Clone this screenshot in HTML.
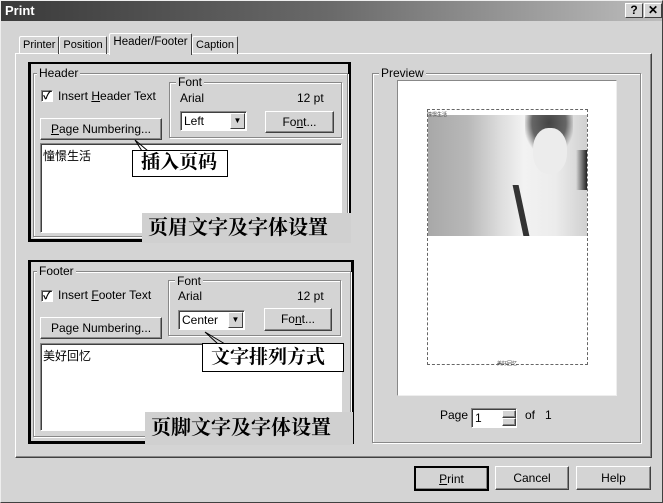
<!DOCTYPE html>
<html><head><meta charset="utf-8"><style>
*{box-sizing:border-box;margin:0;padding:0}
body{width:663px;height:503px;background:#d4d4d4;font-family:"Liberation Sans","Noto Sans CJK SC",sans-serif;font-size:12px;color:#000;position:relative;overflow:hidden}
.a{position:absolute}
.title{left:0;top:0;width:663px;height:21px;background:linear-gradient(90deg,#3a3a3a,#6a6a6a 50%,#bdbdbd);color:#fff;font-weight:bold;font-size:13px;padding:3px 5px}
.tb{width:18px;height:15px;background:#d4d4d4;border:1px solid;border-color:#fff #404040 #404040 #fff;font-weight:bold;font-size:12px;color:#000;text-align:center;line-height:13px}
.tab{top:36px;height:18px;border:1px solid;border-bottom:none;border-color:#fff #404040 #404040 #fff;border-radius:2px 2px 0 0;padding:2px 3px;font-size:11px;white-space:nowrap;text-align:center}
.panel{left:15px;top:53px;width:637px;height:405px;border:1px solid;border-color:#fff #404040 #404040 #fff;box-shadow:inset -1px -1px 0 #888}
.grp{border:1px solid #888;box-shadow:1px 1px 0 #fff inset,1px 1px 0 #fff}
.lbl{background:#d4d4d4;padding:0 2px}
.btn{border:1px solid;border-color:#fff #404040 #404040 #fff;box-shadow:inset -1px -1px 0 #888;text-align:center;background:#d4d4d4}
.sunk{border:1px solid;border-color:#888 #fff #fff #888;box-shadow:inset 1px 1px 0 #404040;background:#fff}
.cb{width:12px;height:12px;background:#fff;border:1px solid;border-color:#888 #fff #fff #888;box-shadow:inset 1px 1px 0 #404040;font-size:11px;line-height:10px;text-align:center;font-weight:bold}
.thick{border:3px solid #000;border-top-width:2px}
.callout{background:#fff;border:1px solid #000;font-weight:bold;font-family:"Liberation Serif","Noto Serif CJK SC",serif;font-size:19px;line-height:24px;padding:0 8px}
.big{background:#d0d0d0;font-weight:bold;font-family:"Liberation Serif","Noto Serif CJK SC",serif;font-size:20px;padding:2px 6px;line-height:26px}
.dd{width:15px;height:16px;background:#d4d4d4;border:1px solid;border-color:#fff #404040 #404040 #fff;font-size:8px;text-align:center;line-height:14px}
</style></head><body>
<div class="a title">Print</div>
<div class="a tb" style="left:625px;top:3px">?</div>
<div class="a tb" style="left:644px;top:3px">✕</div>
<div class="a" style="left:0;top:0;width:663px;height:503px;border:1px solid;border-color:#eee #404040 #404040 #eee;pointer-events:none"></div>

<div class="a panel"></div>
<div class="a tab" style="left:19px;width:40px">Printer</div>
<div class="a tab" style="left:59px;width:48px">Position</div>
<div class="a tab" style="left:109px;top:33px;height:22px;width:83px;background:#d4d4d4;font-size:11.5px">Header/Footer</div>
<div class="a tab" style="left:192px;width:46px">Caption</div>

<!-- Header -->
<div class="a thick" style="left:28px;top:62px;width:323px;height:180px"></div>
<div class="a grp" style="left:33px;top:73px;width:315px;height:164px"></div>
<div class="a lbl" style="left:37px;top:66px">Header</div>
<div class="a cb" style="left:41px;top:90px">✓</div>
<div class="a" style="left:58px;top:89px">Insert <u>H</u>eader Text</div>
<div class="a grp" style="left:169px;top:82px;width:173px;height:56px"></div>
<div class="a lbl" style="left:176px;top:75px">Font</div>
<div class="a" style="left:180px;top:91px">Arial</div>
<div class="a" style="left:297px;top:91px">12 pt</div>
<div class="a sunk" style="left:180px;top:111px;width:67px;height:20px;padding:2px 3px">Left</div>
<div class="a dd" style="left:230px;top:113px">▼</div>
<div class="a btn" style="left:265px;top:111px;width:69px;height:22px;line-height:20px">Fo<u>n</u>t...</div>
<div class="a btn" style="left:40px;top:118px;width:122px;height:22px;line-height:20px"><u>P</u>age Numbering...</div>
<div class="a sunk" style="left:40px;top:143px;width:302px;height:90px;padding:3px 2px">憧憬生活</div>
<svg class="a" style="left:130px;top:138px" width="30" height="16"><path d="M5 2 L18 13 M5 2 L12 13" stroke="#000" fill="none"/></svg>
<div class="a callout" style="left:132px;top:150px;width:96px;height:27px">插入页码</div>
<div class="a big" style="left:142px;top:213px;width:209px;height:30px">页眉文字及字体设置</div>

<!-- Footer -->
<div class="a thick" style="left:28px;top:260px;width:326px;height:184px"></div>
<div class="a grp" style="left:33px;top:271px;width:318px;height:166px"></div>
<div class="a lbl" style="left:37px;top:264px">Footer</div>
<div class="a cb" style="left:41px;top:290px">✓</div>
<div class="a" style="left:58px;top:288px">Insert <u>F</u>ooter Text</div>
<div class="a grp" style="left:168px;top:280px;width:173px;height:56px"></div>
<div class="a lbl" style="left:175px;top:274px">Font</div>
<div class="a" style="left:178px;top:289px">Arial</div>
<div class="a" style="left:297px;top:289px">12 pt</div>
<div class="a sunk" style="left:178px;top:310px;width:67px;height:20px;padding:2px 3px">Center</div>
<div class="a dd" style="left:228px;top:312px">▼</div>
<div class="a btn" style="left:264px;top:308px;width:68px;height:23px;line-height:21px">Fo<u>n</u>t...</div>
<div class="a btn" style="left:40px;top:317px;width:122px;height:22px;line-height:20px">Pa<u>g</u>e Numbering...</div>
<div class="a sunk" style="left:40px;top:343px;width:302px;height:88px;padding:3px 2px">美好回忆</div>
<svg class="a" style="left:200px;top:330px" width="40" height="16"><path d="M5 2 L25 14 M5 2 L18 14" stroke="#000" fill="none"/></svg>
<div class="a callout" style="left:202px;top:343px;width:142px;height:29px;line-height:27px">文字排列方式</div>
<div class="a big" style="left:145px;top:412px;width:208px;height:33px;line-height:29px">页脚文字及字体设置</div>

<!-- Preview -->
<div class="a grp" style="left:372px;top:73px;width:269px;height:370px"></div>
<div class="a lbl" style="left:379px;top:66px">Preview</div>
<div class="a" style="left:397px;top:80px;width:220px;height:316px;background:#fff;border:1px solid;border-color:#888 #eee #eee #888"></div>
<div class="a" style="left:427px;top:109px;width:161px;height:256px;border:1px dashed #666"></div>
<div class="a" style="left:428px;top:115px;width:159px;height:121px;background:linear-gradient(90deg,#a8a8a8,#b8b8b8 25%,#dcdcdc 45%,#f2f2f2 60%,#ececec 80%,#d0d0d0)"></div>
<div class="a" style="left:525px;top:115px;width:48px;height:40px;background:radial-gradient(ellipse at 50% 20%,#444,#666 50%,rgba(200,200,200,0) 75%)"></div>
<div class="a" style="left:533px;top:128px;width:34px;height:46px;background:#ececec;border-radius:45%"></div>
<div class="a" style="left:576px;top:150px;width:11px;height:40px;background:linear-gradient(90deg,rgba(0,0,0,0),#222)"></div>
<div class="a" style="left:518px;top:185px;width:6px;height:51px;background:#333;transform:skewX(12deg)"></div>
<div class="a" style="left:427px;top:111px;font-size:5px;color:#444">憧憬生活</div>
<div class="a" style="left:497px;top:360px;font-size:5px;color:#444">美好回忆</div>
<div class="a" style="left:440px;top:408px">Page</div>
<div class="a sunk" style="left:471px;top:408px;width:46px;height:20px;padding:2px 3px">1</div>
<div class="a btn" style="left:502px;top:410px;width:14px;height:8px"></div>
<div class="a btn" style="left:502px;top:418px;width:14px;height:8px"></div>
<div class="a" style="left:525px;top:408px">of&nbsp;&nbsp;&nbsp;1</div>

<div class="a btn" style="left:414px;top:466px;width:75px;height:25px;line-height:22px;border:2px solid #000"><u>P</u>rint</div>
<div class="a btn" style="left:495px;top:466px;width:74px;height:24px;line-height:22px">Cancel</div>
<div class="a btn" style="left:576px;top:466px;width:75px;height:24px;line-height:22px">Help</div>
</body></html>
